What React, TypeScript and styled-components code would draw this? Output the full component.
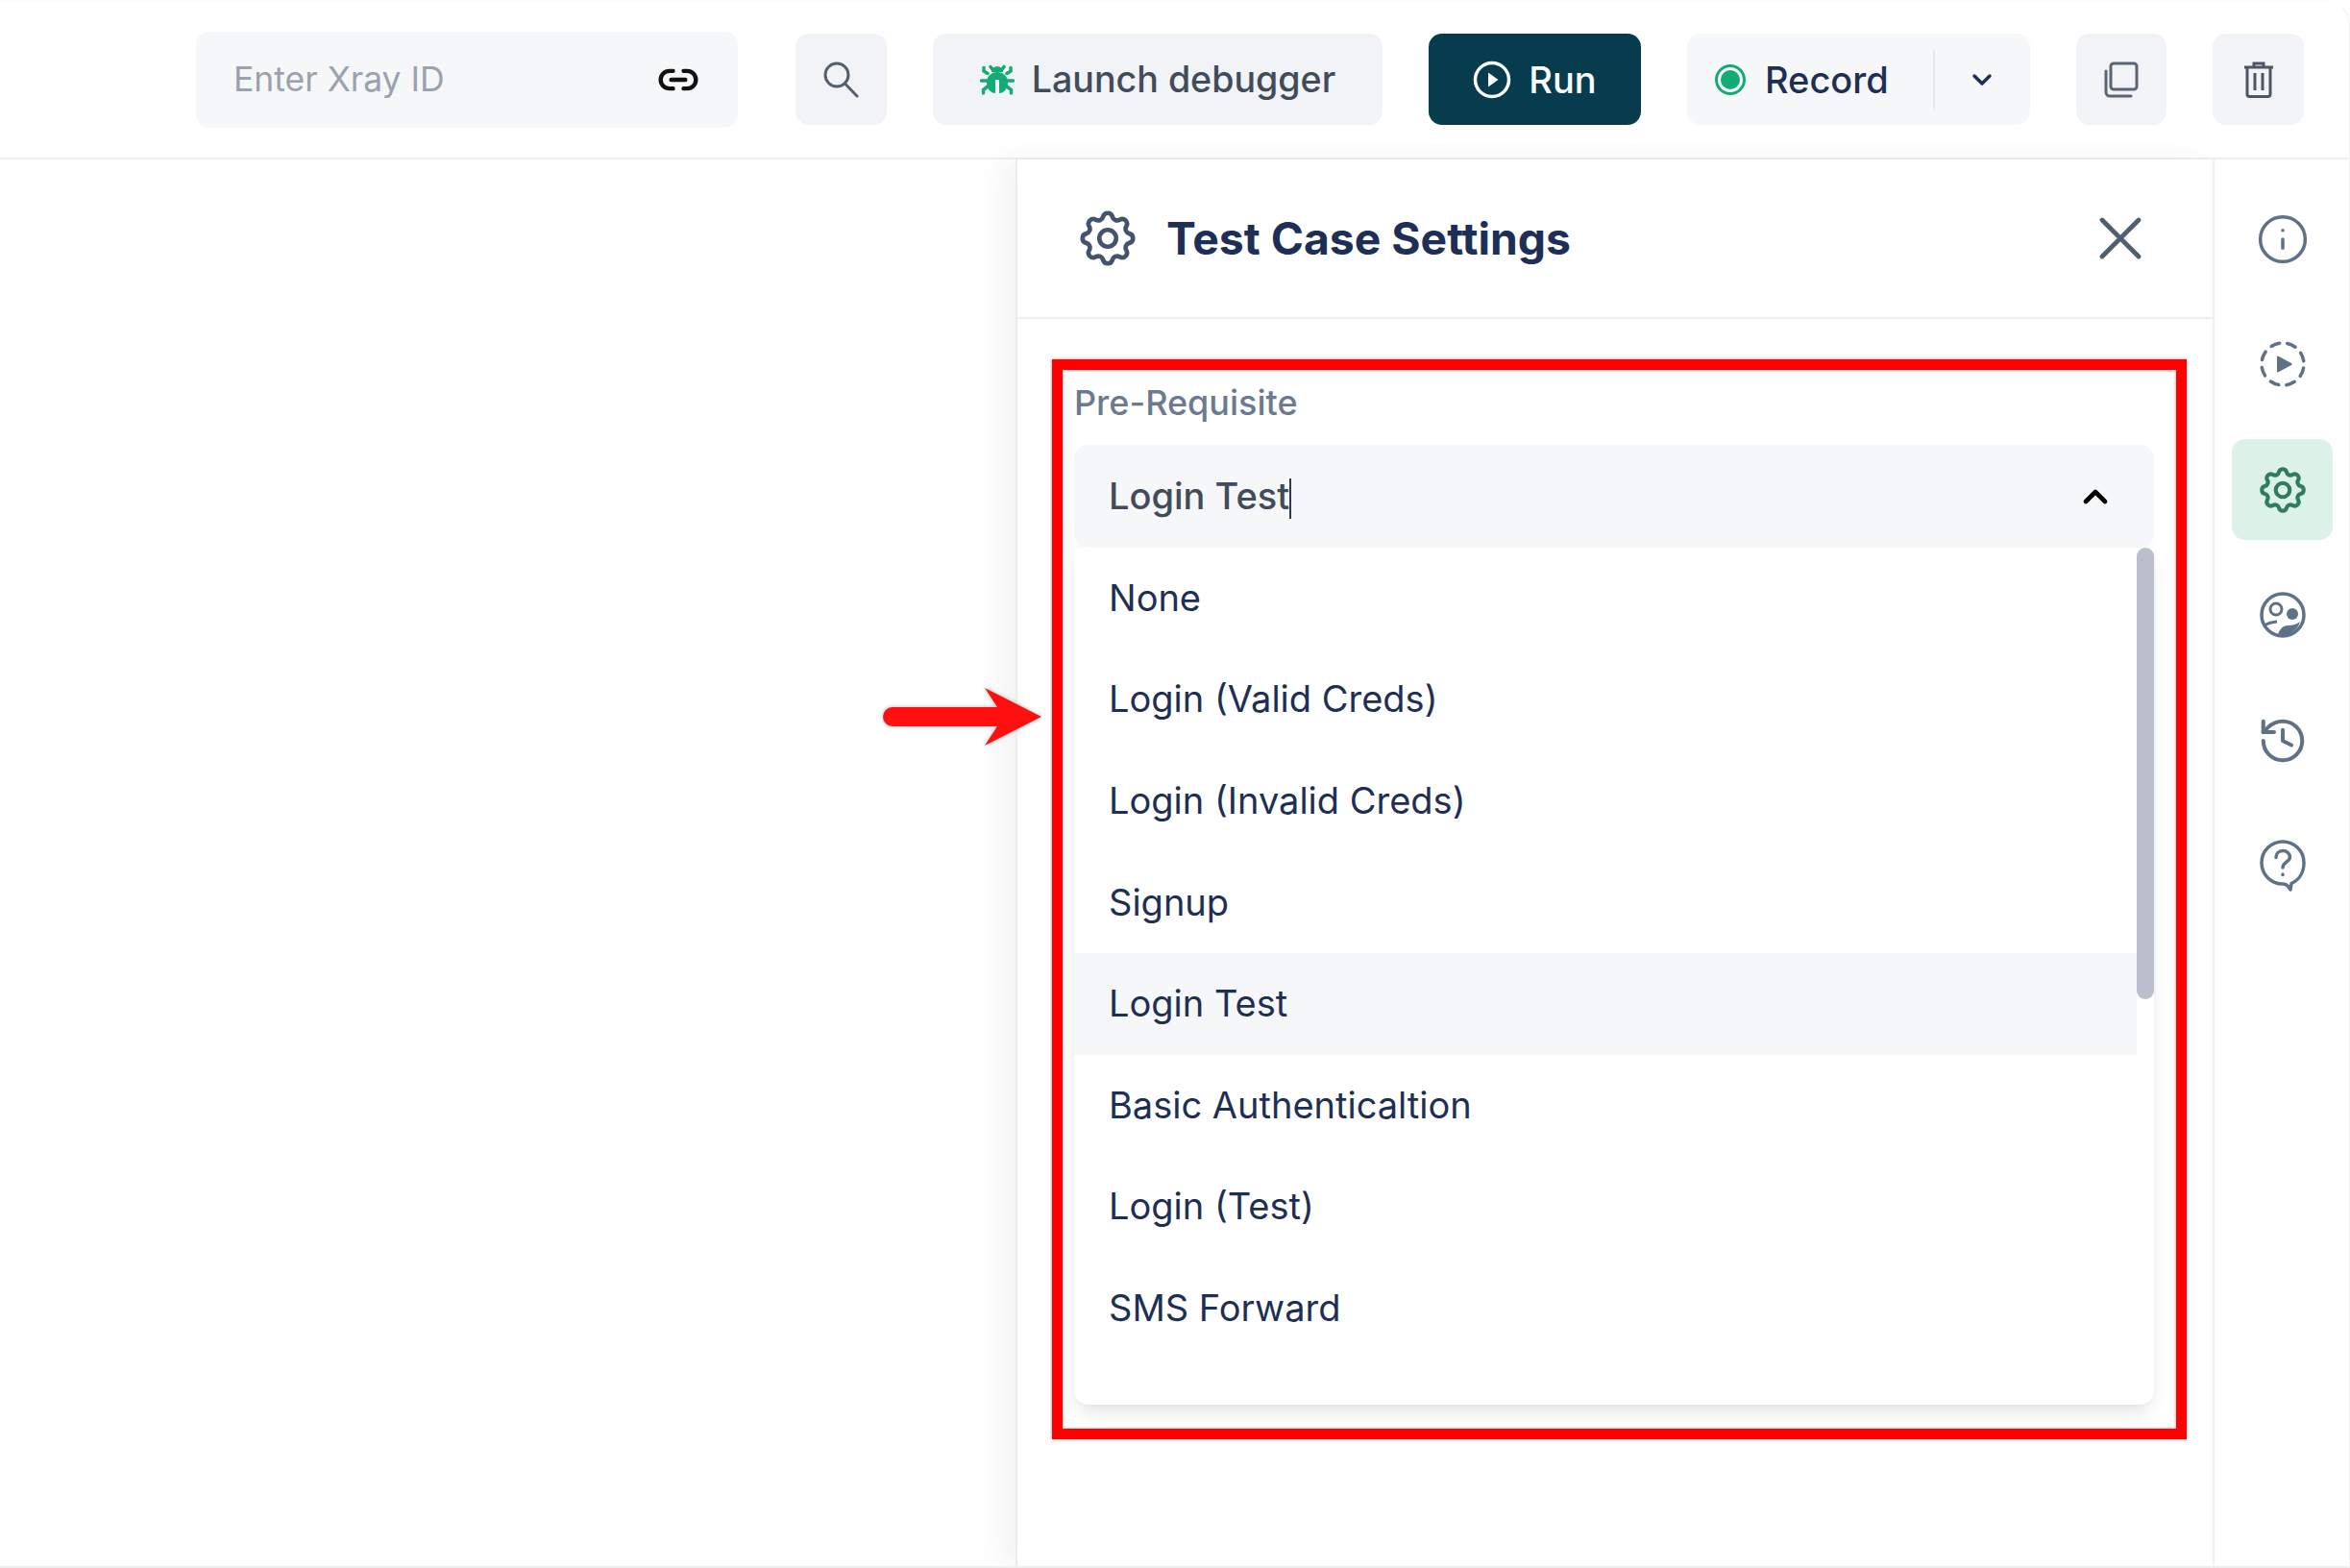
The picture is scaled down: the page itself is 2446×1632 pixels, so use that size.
import React, { FC } from 'react';
import styled, { createGlobalStyle } from 'styled-components';
import { Link2, ChevronDown, ChevronUp, X, Info, History } from 'lucide-react';
import { TbSettings } from 'react-icons/tb';

const GlobalStyle = createGlobalStyle`
  html, body {
    margin: 0;
    padding: 0;
    background: #ffffff;
  }
  body {
    font-family: Inter, "Liberation Sans", sans-serif;
  }
`;

const Frame = styled.div`
  position: relative;
  width: 2446px;
  height: 1632px;
  box-sizing: border-box;
  display: flex;
  flex-direction: column;
  overflow: hidden;
  background: #ffffff;
  border-top-right-radius: 26px;
  border-top: 1px solid #fbfbfc;
  border-right: 1px solid #f1f2f4;
  border-bottom: 2px solid #eeeff1;
`;

const Toolbar = styled.header`
  height: 165px;
  flex: none;
  box-sizing: border-box;
  display: flex;
  align-items: center;
  gap: 48px;
  padding-left: 204px;
  border-bottom: 2px solid #eeeff1;
`;

const XrayInput = styled.div`
  width: 564px;
  height: 100px;
  box-sizing: border-box;
  display: flex;
  align-items: center;
  justify-content: space-between;
  padding: 0 40px 0 39px;
  margin-right: 12px;
  background: #f6f7f9;
  border-radius: 14px;
  font-size: 35.5px;
  color: #9aa2af;
`;

const ToolButton = styled.button<{ $width: number; $dark?: boolean }>`
  width: ${(p) => p.$width}px;
  height: 95px;
  flex: none;
  box-sizing: border-box;
  padding: 0;
  border: 0;
  border-radius: 14px;
  display: flex;
  align-items: center;
  justify-content: center;
  gap: 18px;
  font-family: inherit;
  font-size: 38px;
  font-weight: 500;
  color: ${(p) => (p.$dark ? '#ffffff' : '#414b5a')};
  background: ${(p) => (p.$dark ? '#063c4e' : '#f2f3f6')};
`;

const LaunchLabel = styled.span`
  font-size: 37.6px;
`;

const RecordButton = styled.div`
  width: 357px;
  height: 95px;
  flex: none;
  display: flex;
  align-items: center;
  background: #f6f7f9;
  border-radius: 14px;
  font-size: 38px;
  font-weight: 500;
  color: #1e2f55;
`;

const RecordLabel = styled.div`
  width: 258px;
  height: 64px;
  box-sizing: border-box;
  padding-left: 30px;
  display: flex;
  align-items: center;
  gap: 23px;
  border-right: 2px solid #e9eaed;
`;

const RecordDot = styled.span`
  width: 20px;
  height: 20px;
  border-radius: 50%;
  background: #10ac74;
  border: 3px solid #f6f7f9;
  outline: 3px solid #10ac74;
  box-sizing: content-box;
  margin-left: 2px;
`;

const RecordCaret = styled.div`
  flex: 1;
  display: flex;
  justify-content: center;
  padding-right: 2px;
  color: #1e2f55;
`;

const Main = styled.main`
  flex: 1;
  min-height: 0;
  display: flex;
`;

const Canvas = styled.div`
  width: 1057px;
  flex: none;
`;

const Panel = styled.section`
  flex: 1;
  min-width: 0;
  box-sizing: border-box;
  border-left: 2px solid #ebecf0;
  box-shadow: -14px 0 26px rgba(40, 50, 70, 0.06);
  background: #ffffff;
`;

const PanelHeader = styled.div`
  height: 166px;
  box-sizing: border-box;
  display: flex;
  align-items: center;
  padding: 0 58px 0 59px;
  border-bottom: 2px solid #eeeff1;
  color: #43536e;
`;

const PanelTitle = styled.h2`
  flex: 1;
  margin: 0 0 0 26px;
  font-size: 46.3px;
  font-weight: 700;
  color: #1e2f55;
`;

const Highlight = styled.div`
  height: 1124px;
  box-sizing: border-box;
  margin: 42px 27px 0 36px;
  padding: 12px 23px 0 12px;
  border: 11px solid #ff0000;
  box-shadow: 0 0 3px rgba(0, 0, 0, 0.45), inset 0 0 3px rgba(0, 0, 0, 0.45);
`;

const FieldLabel = styled.div`
  height: 44px;
  line-height: 44px;
  margin-bottom: 22px;
  font-size: 36px;
  font-weight: 500;
  color: #6b7a90;
`;

const SelectBox = styled.div`
  position: relative;
  z-index: 1;
  height: 107px;
  box-sizing: border-box;
  display: flex;
  align-items: center;
  justify-content: space-between;
  padding: 0 41px 0 36px;
  background: #f6f7f9;
  border-radius: 14px;
  font-size: 38px;
  font-weight: 500;
  color: #414b5a;
  svg {
    color: #000000;
  }
`;

const Caret = styled.span`
  display: inline-block;
  width: 2px;
  height: 42px;
  vertical-align: middle;
  background: #333a45;
`;

const Dropdown = styled.div`
  height: 892px;
  display: flex;
  border-radius: 0 0 14px 14px;
  background: #ffffff;
  box-shadow: 0 12px 18px -4px rgba(30, 40, 60, 0.12), 0 0 4px rgba(30, 40, 60, 0.05);
`;

const Options = styled.ul`
  flex: 1;
  min-width: 0;
  margin: 0;
  padding: 0;
  list-style: none;
`;

const Option = styled.li<{ $active?: boolean }>`
  height: 105.6px;
  box-sizing: border-box;
  display: flex;
  align-items: center;
  padding: 0 0 2px 36px;
  font-size: 38px;
  color: #1e2f55;
  background: ${(p) => (p.$active ? '#f6f7f9' : 'transparent')};
`;

const ScrollTrack = styled.div`
  width: 18px;
  flex: none;
`;

const ScrollThumb = styled.div`
  height: 470px;
  border-radius: 9px;
  background: #b8c0ce;
`;

const Rail = styled.nav`
  width: 142px;
  flex: none;
  box-sizing: border-box;
  padding: 30px 0 0 18px;
  display: flex;
  flex-direction: column;
  gap: 25.5px;
  border-left: 2px solid #f0f1f3;
`;

const RailTile = styled.div<{ $active?: boolean }>`
  width: 105px;
  height: 105px;
  display: flex;
  align-items: center;
  justify-content: center;
  border-radius: 14px;
  color: ${(p) => (p.$active ? '#2f7d5c' : '#5f7188')};
  background: ${(p) => (p.$active ? '#dcf1e7' : 'transparent')};
`;

const CalloutArrow = styled.svg`
  position: absolute;
  left: 915px;
  top: 711px;
  filter: drop-shadow(0 0 2px rgba(0, 0, 0, 0.3));
`;

const options = [
  'None',
  'Login (Valid Creds)',
  'Login (Invalid Creds)',
  'Signup',
  'Login Test',
  'Basic Authenticaltion',
  'Login (Test)',
  'SMS Forward',
];

const SearchIcon: FC = () => (
  <svg width="38" height="38" viewBox="0 0 38 38" fill="none" stroke="#54606f" strokeWidth="3" strokeLinecap="round">
    <circle cx="14" cy="14" r="12" />
    <path d="M22.500 23 35 36" />
  </svg>
);

const BugIcon: FC = () => (
  <svg width="36" height="34" viewBox="0 0 36 34" fill="none">
    <path
      d="M11 3.500 14 7.500M25 3.500 22 7.500M8 10.500 4 8V4.500M28 10.500 32 8V4.500M7 18H1.500M29 18H34.500M8 24 3.500 27.500V31M28 24 32.500 27.500V31"
      stroke="#10ac74"
      strokeWidth="3.500"
      strokeLinecap="round"
    />
    <path d="M12 9a6 6 0 0 1 12 0Z" fill="#10ac74" />
    <path d="M18 9c6 0 11 4 11 11 0 6-4 11-9 11h-4c-5 0-9-5-9-11 0-7 5-11 11-11Z" fill="#10ac74" />
    <path d="M16 17h4v15h-4Z" fill="#f2f3f6" />
  </svg>
);

const CopyIcon: FC = () => (
  <svg width="40" height="40" viewBox="0 0 40 40" fill="none" stroke="#5a6474" strokeWidth="3">
    <rect x="9" y="3" width="27" height="27" rx="3" />
    <path d="M4 11v22a4 4 0 0 0 4 4h22" strokeLinecap="round" />
  </svg>
);

const TrashIcon: FC = () => (
  <svg width="34" height="38" viewBox="0 0 34 38" fill="none" stroke="#4c5666" strokeWidth="3">
    <path d="M2 6h30M12 5V2h10v3" />
    <path d="M5 6v28a2.500 2.500 0 0 0 2.500 2.500h19a2.500 2.500 0 0 0 2.500-2.500V6" />
    <path d="M13 12v18M21 12v18" />
  </svg>
);

const RunIcon: FC = () => (
  <svg width="40" height="40" viewBox="0 0 40 40">
    <circle cx="20" cy="20" r="17.500" fill="none" stroke="#ffffff" strokeWidth="3.500" />
    <path d="M16 12.500 26.500 20 16 27.500Z" fill="#ffffff" />
  </svg>
);

const DashedPlayIcon: FC = () => (
  <svg width="50" height="50" viewBox="0 0 50 50">
    <circle
      cx="25"
      cy="25"
      r="22"
      fill="none"
      stroke="currentColor"
      strokeWidth="3.500"
      strokeLinecap="round"
      strokeDasharray="9 8.280"
      strokeDashoffset="-4.140"
    />
    <path d="M19 17.500a1 1 0 0 1 1.500-.8L34 24a1.200 1.200 0 0 1 0 2l-13.500 7.300a1 1 0 0 1-1.500-.8Z" fill="currentColor" />
  </svg>
);

const FaceIcon: FC = () => (
  <svg width="50" height="50" viewBox="0 0 50 50">
    <circle cx="25" cy="25" r="22" fill="none" stroke="currentColor" strokeWidth="3.500" />
    <circle cx="18" cy="19" r="6" fill="none" stroke="currentColor" strokeWidth="3" />
    <circle cx="35" cy="24" r="6" fill="currentColor" />
    <path d="M5 36c4-2 8-3.500 14-4" fill="none" stroke="currentColor" strokeWidth="3" />
    <path d="M20 45c2-5 5-9 10-9s9-1 13-4c-2 7-9 14-18 14Z" fill="currentColor" />
  </svg>
);

const HelpIcon: FC = () => (
  <svg width="50" height="56" viewBox="0 0 50 56" fill="none" stroke="currentColor" strokeWidth="3.500" strokeLinecap="round" strokeLinejoin="round">
    <path d="M25 3C13 3 3 12.500 3 25s10 22 22 22c2.500 0 3.500 0 5.500 2.500L33 53l1-6.500C42 43 47 35 47 25 47 12.500 37 3 25 3Z" />
    <path d="M18 19.500c0-4 3-7 7.200-7s7.300 3 7.300 6.500c0 5-7.500 5.500-7.500 11" />
    <path d="M25 37v.5" />
  </svg>
);

const App: FC = () => (
  <Frame>
    <GlobalStyle />
    <Toolbar>
      <XrayInput>
        Enter Xray ID
        <Link2 size={44} color="#111111" strokeWidth={2.4} />
      </XrayInput>
      <ToolButton $width={95}>
        <SearchIcon />
      </ToolButton>
      <ToolButton $width={468}>
        <BugIcon />
        <LaunchLabel>Launch debugger</LaunchLabel>
      </ToolButton>
      <ToolButton $width={221} $dark>
        <RunIcon />
        Run
      </ToolButton>
      <RecordButton>
        <RecordLabel>
          <RecordDot />
          Record
        </RecordLabel>
        <RecordCaret>
          <ChevronDown size={32} strokeWidth={2.6} />
        </RecordCaret>
      </RecordButton>
      <ToolButton $width={94}>
        <CopyIcon />
      </ToolButton>
      <ToolButton $width={95}>
        <TrashIcon />
      </ToolButton>
    </Toolbar>
    <Main>
      <Canvas />
      <Panel>
        <PanelHeader>
          <TbSettings size={70} strokeWidth={1.6} />
          <PanelTitle>Test Case Settings</PanelTitle>
          <X size={76} color="#4f5d70" strokeWidth={1.5} />
        </PanelHeader>
        <Highlight>
          <FieldLabel>Pre-Requisite</FieldLabel>
          <SelectBox>
            <span>
              Login Test
              <Caret />
            </span>
            <ChevronUp size={40} strokeWidth={2.8} />
          </SelectBox>
          <Dropdown>
            <Options>
              {options.map((option) => (
                <Option key={option} $active={option === 'Login Test'}>
                  {option}
                </Option>
              ))}
            </Options>
            <ScrollTrack>
              <ScrollThumb />
            </ScrollTrack>
          </Dropdown>
        </Highlight>
      </Panel>
      <Rail>
        <RailTile>
          <Info size={56} strokeWidth={1.5} />
        </RailTile>
        <RailTile>
          <DashedPlayIcon />
        </RailTile>
        <RailTile $active>
          <TbSettings size={58} strokeWidth={1.7} />
        </RailTile>
        <RailTile>
          <FaceIcon />
        </RailTile>
        <RailTile>
          <History size={54} strokeWidth={1.8} />
        </RailTile>
        <RailTile>
          <HelpIcon />
        </RailTile>
      </Rail>
    </Main>
    <CalloutArrow width="176" height="68" viewBox="0 0 176 68">
      <path
        d="M14 24H123L110 4 169 34 110 64 123 44H14a10 10 0 0 1 0-20Z"
        fill="#ff0f0f"
      />
    </CalloutArrow>
  </Frame>
);

export default App;
